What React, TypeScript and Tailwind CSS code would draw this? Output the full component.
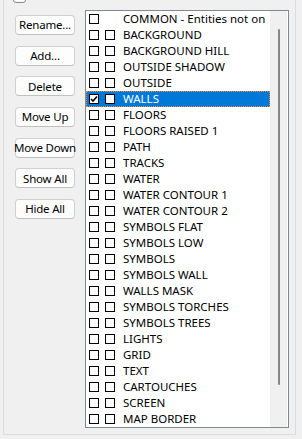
import React from 'react'

const layers = [
  'COMMON - Entities not on',
  'BACKGROUND',
  'BACKGROUND HILL',
  'OUTSIDE SHADOW',
  'OUTSIDE',
  'WALLS',
  'FLOORS',
  'FLOORS RAISED 1',
  'PATH',
  'TRACKS',
  'WATER',
  'WATER CONTOUR 1',
  'WATER CONTOUR 2',
  'SYMBOLS FLAT',
  'SYMBOLS LOW',
  'SYMBOLS',
  'SYMBOLS WALL',
  'WALLS MASK',
  'SYMBOLS TORCHES',
  'SYMBOLS TREES',
  'LIGHTS',
  'GRID',
  'TEXT',
  'CARTOUCHES',
  'SCREEN',
  'MAP BORDER',
]

const buttons = ['Rename...', 'Add...', 'Delete', 'Move Up', 'Move Down', 'Show All', 'Hide All']

function Box({ checked }: { checked?: boolean }) {
  return (
    <div className="w-[10px] h-[10px] border border-black bg-white flex items-center justify-center shrink-0">
      {checked && (
        <svg width="8" height="8" viewBox="0 0 8 8">
          <path d="M1 4 L3 6 L7 1.5" fill="none" stroke="black" strokeWidth="1.6" />
        </svg>
      )}
    </div>
  )
}

export default function App() {
  const selected = 5

  return (
    <div className="w-[302px] h-[439px] bg-[#f0f0f0] overflow-hidden relative font-['Noto_Sans',sans-serif] text-[11.5px] text-black">
      {/* group box title checkbox, cut off at the top */}
      <div className="absolute left-[13px] top-[-10px] w-[13px] h-[13px] rounded-[3px] border border-[#8a8a8a] bg-[#fbfbfb]" />

      <div className="ml-[3px] w-[293px] h-[435px] border-x border-b border-[#dcdcdc] flex">
        {/* buttons */}
        <div className="pl-[11px] pt-[15px] flex flex-col gap-[10.7px]">
          {buttons.map(b => (
            <button
              key={b}
              className="w-[60px] h-[20px] rounded-[4px] border border-[#d0d0d0] border-b-[#c0c0c0] bg-[#fdfdfd] text-[11.5px] tracking-[-0.2px] leading-none flex items-center justify-center whitespace-nowrap"
            >
              {b}
            </button>
          ))}
        </div>

        {/* layer list */}
        <div className="ml-[10px] mt-[10px] w-[204px] h-[418px] border border-[#828790] bg-white flex">
          <div className="w-[184px] overflow-hidden">
            {layers.map((name, i) => {
              const sel = i === selected
              return (
                <div
                  key={name}
                  className={`h-[16px] flex items-center whitespace-nowrap ${sel ? 'bg-[#0078d7] text-white outline-1 outline-dotted outline-offset-[-1px] outline-[#ff8728]' : ''}`}
                >
                  <div className="w-[3px] shrink-0" />
                  <Box checked={sel} />
                  <div className="w-[6px] shrink-0" />
                  {i === 0 ? <div className="w-[10px] shrink-0" /> : <Box />}
                  <div className="w-[8px] shrink-0" />
                  <span className="leading-none">{name}</span>
                </div>
              )
            })}
          </div>
          <div className="w-[17px] bg-[#f0f0f0] flex justify-center pt-[18px]">
            <div className="w-[2px] h-[356px] bg-[#868686] rounded-full" />
          </div>
        </div>
      </div>
    </div>
  )
}
